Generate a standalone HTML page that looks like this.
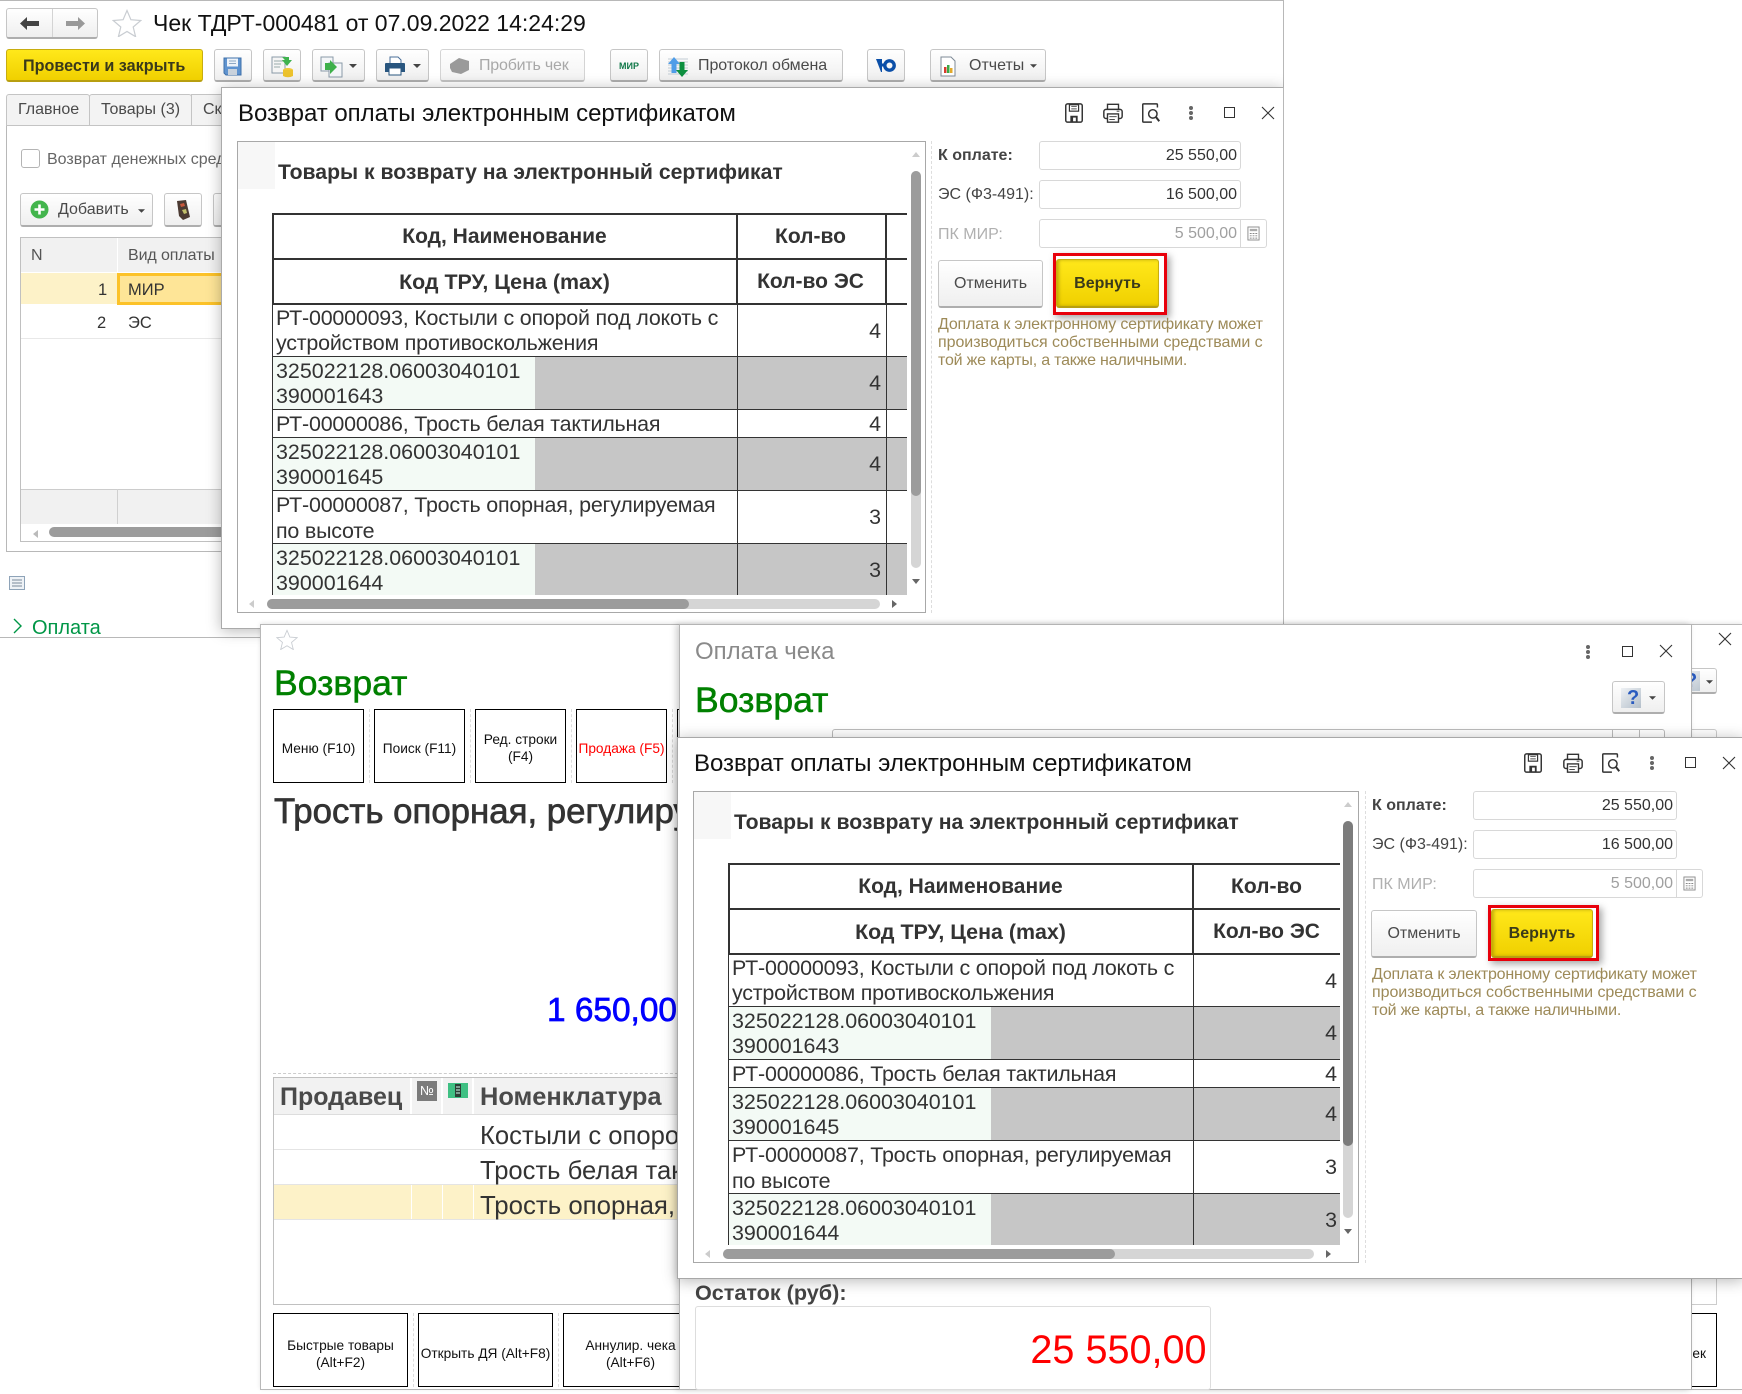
<!DOCTYPE html>
<html lang="ru"><head><meta charset="utf-8"><title>Чек</title>
<style>
html,body{margin:0;padding:0;background:#fff}
#p{position:relative;width:1742px;height:1394px;overflow:hidden;background:#fff;font-family:"Liberation Sans","DejaVu Sans",sans-serif;color:#333}
#p div,#p span,#p svg{position:absolute;box-sizing:border-box}
.t{white-space:nowrap;line-height:30px;height:30px}
.b{background:linear-gradient(#fff,#efefef);border:1px solid #c6c6c6;border-bottom:2px solid #aeaeae;border-radius:3px}
.y{background:linear-gradient(#ffe81a,#f0d000);border:1px solid #c8ad10;border-bottom:2px solid #b89f10;border-radius:3px}
.i{background:#fff;border:1px solid #d8d8d8;border-radius:3px}
.k{background:#fff;border:1.5px solid #000}
.h{font-size:13.7px;text-align:center;color:#111;line-height:17px;white-space:nowrap}
.sep{border-left:1px dashed #ddd;width:1px}
.dlg{background:#fff;border:1px solid #aaa;box-shadow:0 2px 14px rgba(0,0,0,.28);overflow:hidden;clip-path:inset(-20px 0 -20px -20px)}
.win{background:#fff;border:1px solid #b8b8b8}
.c{left:0;width:465px;text-align:center;font-weight:bold;font-size:21px;color:#333}
.n{left:0;width:609px;text-align:right;font-size:21.4px;color:#333;margin-top:1px}
.l{left:4px;font-size:21.45px;color:#333}
.w{letter-spacing:-.2px}
.hl{height:2px;background:#333;left:0}
.tl{height:1px;background:#333;left:0;width:700px}
.v{width:1px;background:#333}
.note{color:#9d8a58;font-size:16px;letter-spacing:-.2px}
.gr{font-size:35.6px;color:#008000;-webkit-text-stroke:.5px #008000}
</style></head><body><div id="p">
<svg width="0" height="0" style="display:none">
<symbol id="sv" viewBox="0 0 24 24"><rect x="3" y="2" width="18" height="20" rx="2" fill="none" stroke="#333" stroke-width="1.6"/><rect x="7" y="3" width="10" height="7" fill="none" stroke="#333" stroke-width="1.3"/><path d="M9 5h6M9 7.5h6" stroke="#555"/><rect x="8" y="15" width="8" height="7" fill="#333"/><rect x="11" y="17" width="3" height="4" fill="#fff"/></symbol>
<symbol id="pr" viewBox="0 0 24 24"><path d="M6 8V2.5h12V8" fill="none" stroke="#333" stroke-width="1.5"/><rect x="2" y="8" width="20" height="10" rx="2.5" fill="none" stroke="#333" stroke-width="1.6"/><rect x="6" y="13" width="12" height="9" fill="#fff" stroke="#333" stroke-width="1.5"/><path d="M8 16h8M8 19h6M16 10h3" stroke="#333"/></symbol>
<symbol id="pv" viewBox="0 0 24 24"><path d="M19 6V3q0-1-1-1H4Q3 2 3 3v18q0 1 1 1h9" fill="none" stroke="#333" stroke-width="1.6"/><circle cx="14" cy="13" r="4.6" fill="none" stroke="#333" stroke-width="1.6"/><path d="M17.5 16.5L21 21" stroke="#333" stroke-width="2.2"/></symbol>
<symbol id="x" viewBox="0 0 14 14"><path d="M1 1L13 13M13 1L1 13" stroke="#333" stroke-width="1.1" fill="none"/></symbol>
<symbol id="st" viewBox="0 0 30 28"><path d="M15 1.5l3.9 9.2 9.9.8-7.6 6.5 2.4 9.7L15 22.5l-8.6 5.2 2.4-9.7L1.2 11.5l9.9-.8z" fill="#fff" stroke="#c9cdd2" stroke-width="1.2"/></symbol>
<symbol id="calc" viewBox="0 0 14 16"><rect x="1" y="1" width="12" height="14" fill="#fff" stroke="#8a8a8a"/><rect x="3" y="3" width="8" height="2.5" fill="#aaa"/><path d="M3 8h2M6 8h2M9 8h2M3 10.5h2M6 10.5h2M9 10.5h2M3 13h2M6 13h2M9 13h2" stroke="#888"/></symbol>
<symbol id="ar" viewBox="0 0 8 4"><path d="M0 0h8L4 4z" fill="#444"/></symbol>
</svg>

<!-- WINDOW 1 -->
<div class="win" style="left:-1px;top:0;width:1285px;height:638px"></div>
<div class="b" style="left:6px;top:8px;width:92px;height:31px"></div>
<div style="left:52px;top:9px;width:1px;height:28px;background:#d4d4d4"></div>
<svg style="left:20px;top:16px" width="20" height="15" viewBox="0 0 20 15"><path d="M0 7.5L7 1v4h12v5H7v4z" fill="#444"/></svg>
<svg style="left:65px;top:16px" width="20" height="15" viewBox="0 0 20 15"><path d="M20 7.5L13 1v4H1v5h12v4z" fill="#999"/></svg>
<svg style="left:112px;top:9px" width="30" height="28"><use href="#st"/></svg>
<span class="t" style="left:153px;top:8px;font-size:23px;color:#111">Чек ТДРТ-000481 от 07.09.2022 14:24:29</span>

<div class="y" style="left:6px;top:49px;width:197px;height:33px"></div>
<span class="t" style="left:23px;top:51px;font-size:16.2px;font-weight:bold;color:#3a3a1a">Провести и закрыть</span>
<div class="b" style="left:214px;top:49px;width:38px;height:33px"></div>
<svg style="left:223px;top:57px" width="19" height="19" viewBox="0 0 19 19"><path d="M1 1h17v17H3l-2-2z" fill="#5f93cf" stroke="#3f70aa"/><rect x="4" y="1.5" width="11" height="8" fill="#eef3f9"/><path d="M6 4h7M6 6.500h7" stroke="#8fa8c4"/><rect x="5" y="12" width="9" height="6" fill="#c9d2dc"/></svg>
<div class="b" style="left:263px;top:49px;width:38px;height:33px"></div>
<svg style="left:271px;top:56px" width="24" height="22" viewBox="0 0 24 22"><rect x="1" y="1" width="13" height="16" fill="#f5f5f5" stroke="#8a9aa8"/><path d="M3 5h9M3 8h7M3 11h6" stroke="#9aa"/><path d="M11 1h7v3l3 0-5 6-5-6h3z" fill="#3fb34f"/><ellipse cx="17" cy="14" rx="5" ry="2" fill="#f0c93a"/><path d="M12 14v6q5 2.500 10 0v-6" fill="#ecc22d"/></svg>
<div class="b" style="left:312px;top:49px;width:53px;height:33px"></div>
<svg style="left:320px;top:56px" width="24" height="22" viewBox="0 0 24 22"><rect x="1" y="1" width="12" height="14" fill="#f4f6f8" stroke="#8a9aa8"/><rect x="9" y="7" width="13" height="14" fill="#f4f6f8" stroke="#8a9aa8"/><path d="M5 7h5V4l7 7-7 7v-4H5z" fill="#3eb04a"/></svg>
<svg style="left:349px;top:64px" width="8" height="4"><use href="#ar"/></svg>
<div class="b" style="left:376px;top:49px;width:53px;height:33px"></div>
<svg style="left:385px;top:56px" width="20" height="20" viewBox="0 0 20 20"><path d="M5 8V1h8l3 3v4" fill="#fff" stroke="#4a6f99"/><path d="M0 8q0-1 1-1h18q1 0 1 1v8H0z" fill="#29567f"/><rect x="4" y="12" width="12" height="7" fill="#fff" stroke="#29567f"/></svg>
<svg style="left:413px;top:64px" width="8" height="4"><use href="#ar"/></svg>
<div class="b" style="left:440px;top:49px;width:145px;height:33px;opacity:.75"></div>
<svg style="left:449px;top:57px" width="21" height="18" viewBox="0 0 21 18"><path d="M1 7l9-6 10 3v9l-8 4-9-2-2-4z" fill="#9a9a9a"/></svg>
<span class="t" style="left:479px;top:51px;font-size:16px;color:#a8a8a8;letter-spacing:-.2px">Пробить чек</span>
<div class="b" style="left:610px;top:49px;width:38px;height:33px"></div>
<span class="t" style="left:619px;top:51px;font-size:9px;font-weight:bold;color:#12794a">МИР</span>
<div class="b" style="left:659px;top:49px;width:184px;height:33px"></div>
<svg style="left:667px;top:56px" width="22" height="22" viewBox="0 0 22 22"><path d="M1 3h20M1 6h20M1 9h20M1 12h20M1 15h20M1 18h20" stroke="#c2ccd4"/><path d="M7 1l6 7H9.500v9h-5V8H1z" fill="#4f9de8"/><path d="M15 21l-6-7h3.500V6h5v8H21z" fill="#0c8f3f"/></svg>
<span class="t" style="left:698px;top:51px;font-size:16px;color:#4a4a4a;letter-spacing:-.05px">Протокол обмена</span>
<div class="b" style="left:867px;top:49px;width:38px;height:33px"></div>
<svg style="left:876px;top:58px" width="20" height="15" viewBox="0 0 20 15"><path d="M0 1h6v13H5z" fill="#0b4fa8"/><path d="M5 5.500h4v3H5z" fill="#0b4fa8"/><circle cx="13.500" cy="7.500" r="4.700" fill="none" stroke="#0b4fa8" stroke-width="3.400"/></svg>
<div class="b" style="left:930px;top:49px;width:116px;height:33px"></div>
<svg style="left:940px;top:56px" width="16" height="21" viewBox="0 0 16 21"><path d="M1 1h10l4 4v15H1z" fill="#fff" stroke="#7e8a96"/><rect x="4" y="11" width="2.500" height="6" fill="#d63b2c"/><rect x="7" y="9" width="2.500" height="8" fill="#3aa845"/><rect x="10" y="12" width="2.500" height="5" fill="#e2a92a"/></svg>
<span class="t" style="left:969px;top:51px;font-size:16px;color:#4a4a4a">Отчеты</span>
<svg style="left:1030px;top:64px" width="7" height="4"><use href="#ar"/></svg>

<div style="left:6px;top:125px;width:230px;height:427px;border:1px solid #b8b8b8;border-right:0;background:#fff"></div>
<div style="left:6px;top:94px;width:84px;height:32px;background:#f3f3f3;border:1px solid #c4c4c4;border-radius:3px 3px 0 0"></div>
<span class="t" style="left:18px;top:95px;font-size:16px;color:#4a4a4a">Главное</span>
<div style="left:89px;top:94px;width:103px;height:32px;background:#f3f3f3;border:1px solid #c4c4c4;border-radius:3px 3px 0 0"></div>
<span class="t" style="left:101px;top:95px;font-size:16px;color:#4a4a4a">Товары (3)</span>
<div style="left:191px;top:94px;width:50px;height:32px;background:#f3f3f3;border:1px solid #c4c4c4"></div>
<span class="t" style="left:203px;top:95px;font-size:16px;color:#4a4a4a">Ск</span>
<div style="left:21px;top:149px;width:19px;height:19px;border:1px solid #b4b4b4;border-radius:3px;background:#fff"></div>
<span class="t" style="left:47px;top:145px;font-size:16px;color:#666">Возврат денежных сред</span>
<div class="b" style="left:20px;top:193px;width:133px;height:34px"></div>
<svg style="left:30px;top:200px" width="19" height="19" viewBox="0 0 19 19"><circle cx="9.500" cy="9.500" r="9" fill="#43b54d"/><path d="M9.500 4.500v10M4.500 9.500h10" stroke="#fff" stroke-width="2.600"/></svg>
<span class="t" style="left:58px;top:195px;font-size:16px;color:#4a4a4a">Добавить</span>
<svg style="left:138px;top:209px" width="7" height="4"><use href="#ar"/></svg>
<div class="b" style="left:164px;top:193px;width:38px;height:34px"></div>
<svg style="left:175px;top:200px" width="16" height="20" viewBox="0 0 16 20"><path d="M2 1l9-1 4 17-7 3-4-4z" fill="#4b3a32"/><path d="M5 4l4-1 1 3-4 1z" fill="#c8583c"/><path d="M7 10l4-1 1 4-3 1z" fill="#c2c06a"/></svg>
<div class="b" style="left:213px;top:193px;width:30px;height:34px"></div>
<div style="left:20px;top:237px;width:211px;height:305px;border:1px solid #c0c0c0;border-right:0;background:#fff"></div>
<div style="left:21px;top:238px;width:96px;height:34px;background:#f1f1f1"></div>
<div style="left:118px;top:238px;width:110px;height:34px;background:#f1f1f1"></div>
<span class="t" style="left:31px;top:241px;font-size:16px;color:#555">N</span>
<span class="t" style="left:128px;top:241px;font-size:16px;color:#555;letter-spacing:-.1px">Вид оплаты</span>
<div style="left:21px;top:273px;width:96px;height:31px;background:#fdf2c8"></div>
<div style="left:117px;top:273px;width:110px;height:32px;background:#fee597;border:3px solid #fcc228;border-right:0"></div>
<span class="t" style="left:98px;top:275px;font-size:16.500px">1</span>
<span class="t" style="left:128px;top:275px;font-size:16.500px">МИР</span>
<span class="t" style="left:97px;top:308px;font-size:16.500px">2</span>
<span class="t" style="left:128px;top:308px;font-size:16.500px">ЭС</span>
<div style="left:21px;top:338px;width:211px;height:1px;background:#e8e8e8"></div>
<div style="left:21px;top:489px;width:211px;height:35px;background:#f1f1f1;border-top:1px solid #ccc"></div>
<div style="left:117px;top:489px;width:1px;height:35px;background:#d0d0d0"></div>
<div style="left:49px;top:527px;width:190px;height:10px;background:#9c9c9c;border-radius:5px"></div>
<div style="left:33px;top:530px;border:4px solid transparent;border-right:5px solid #bbb;border-left:0"></div>
<svg style="left:9px;top:576px" width="16" height="14" viewBox="0 0 16 14"><rect x=".5" y=".5" width="15" height="13" fill="#eef2f6" stroke="#8ea3b8"/><path d="M3 4h10M3 7h10M3 10h10" stroke="#7b8b9b"/></svg>
<svg style="left:13px;top:618px" width="9" height="16" viewBox="0 0 9 16"><path d="M1 1l7 7-7 7" fill="none" stroke="#009646" stroke-width="1.400"/></svg>
<span class="t" style="left:32px;top:613px;font-size:20px;color:#009646">Оплата</span>

<!-- DIALOG 1 -->
<div class="dlg" style="left:221px;top:87px;width:1063px;height:542px;border-right:1px solid #b8b8b8">
<span class="t" style="left:16px;top:11px;font-size:24px;color:#111;letter-spacing:-.04px">Возврат оплаты электронным сертификатом</span>
<svg style="left:841px;top:14px" width="22" height="22"><use href="#sv"/></svg>
<svg style="left:880px;top:14px" width="22" height="22"><use href="#pr"/></svg>
<svg style="left:918px;top:14px" width="22" height="22"><use href="#pv"/></svg>
<div style="left:967px;top:18px;width:4px;height:4px;background:#666;border-radius:50%"></div><div style="left:967px;top:23px;width:4px;height:4px;background:#666;border-radius:50%"></div><div style="left:967px;top:28px;width:4px;height:4px;background:#666;border-radius:50%"></div>
<div style="left:1002px;top:19px;width:11px;height:11px;border:1.300px solid #333"></div>
<svg style="left:1039px;top:18px" width="14" height="14"><use href="#x"/></svg>
<div style="left:15px;top:53px;width:689px;height:472px;border:1px solid #a8a8a8;background:#fff"></div>
<div style="left:16px;top:54px;width:37px;height:47px;background:#f7f7f7"></div>
<span class="t" style="left:56px;top:70px;font-size:21.2px;font-weight:bold;color:#333">Товары к возврату на электронный сертификат</span>
<div style="left:50px;top:125px;width:635px;height:382px;overflow:hidden">
<div style="left:0;top:144px;width:700px;height:52px;background:#c6c6c6"></div>
<div style="left:0;top:224px;width:700px;height:53px;background:#c6c6c6"></div>
<div style="left:0;top:330px;width:700px;height:52px;background:#c6c6c6"></div>
<div style="left:0;top:144px;width:263px;height:52px;background:#f3faf5"></div>
<div style="left:0;top:224px;width:263px;height:53px;background:#f3faf5"></div>
<div style="left:0;top:330px;width:263px;height:52px;background:#f3faf5"></div>
<div class="hl" style="top:0;width:700px"></div><div class="hl" style="top:45px;width:700px"></div><div class="hl" style="top:90px;width:700px"></div>
<div style="left:0;top:0;width:2px;height:92px;background:#333"></div><div style="left:464px;top:0;width:2px;height:92px;background:#333"></div><div style="left:613px;top:0;width:2px;height:92px;background:#333"></div>
<div class="v" style="left:0;top:92px;height:290px"></div><div class="v" style="left:465px;top:92px;height:290px"></div><div class="v" style="left:614px;top:92px;height:290px"></div>
<div class="tl" style="top:143px"></div><div class="tl" style="top:196px"></div><div class="tl" style="top:224px"></div><div class="tl" style="top:277px"></div><div class="tl" style="top:330px"></div>
<span class="t c" style="top:9px">Код, Наименование</span>
<span class="t c" style="top:54px;font-size:21.4px">Код ТРУ, Цена (max)</span>
<span class="t c" style="left:465px;width:147px;top:9px">Кол-во</span>
<span class="t c" style="left:465px;width:147px;top:54px">Кол-во ЭС</span>
<span class="t l w" style="top:90px">РТ-00000093, Костыли с опорой под локоть с</span>
<span class="t l w" style="top:115px">устройством противоскольжения</span>
<span class="t l" style="top:143px">325022128.06003040101</span>
<span class="t l" style="top:168px">390001643</span>
<span class="t l w" style="top:196px">РТ-00000086, Трость белая тактильная</span>
<span class="t l" style="top:224px">325022128.06003040101</span>
<span class="t l" style="top:249px">390001645</span>
<span class="t l w" style="top:277px">РТ-00000087, Трость опорная, регулируемая</span>
<span class="t l w" style="top:303px">по высоте</span>
<span class="t l" style="top:330px">325022128.06003040101</span>
<span class="t l" style="top:355px">390001644</span>
<span class="t n" style="top:102px">4</span><span class="t n" style="top:154px">4</span><span class="t n" style="top:195px">4</span><span class="t n" style="top:235px">4</span><span class="t n" style="top:288px">3</span><span class="t n" style="top:341px">3</span>
</div>
<div style="left:689px;top:83px;width:10px;height:397px;background:#d5d5d5;border-radius:5px"></div>
<div style="left:689px;top:83px;width:10px;height:325px;background:#9c9c9c;border-radius:5px"></div>
<div style="left:690px;top:64px;border:4px solid transparent;border-bottom:5px solid #ccc;border-top:0"></div>
<div style="left:690px;top:491px;border:4px solid transparent;border-top:5px solid #666;border-bottom:0"></div>
<div style="left:45px;top:511px;width:613px;height:10px;background:#d5d5d5;border-radius:5px"></div>
<div style="left:45px;top:511px;width:422px;height:10px;background:#9c9c9c;border-radius:5px"></div>
<div style="left:27px;top:512px;border:4px solid transparent;border-right:5px solid #ccc;border-left:0"></div>
<div style="left:670px;top:512px;border:4px solid transparent;border-left:5px solid #666;border-right:0"></div>
<div class="sep" style="left:709px;top:53px;height:472px"></div>
<span class="t" style="left:716px;top:53px;font-size:16px;font-weight:bold;color:#444">К оплате:</span>
<div class="i" style="left:817px;top:53px;width:202px;height:29px"></div>
<span class="t" style="left:818px;top:53px;font-size:16px;width:197px;text-align:right">25 550,00</span>
<span class="t" style="left:716px;top:92px;font-size:16px;color:#444">ЭС (Ф3-491):</span>
<div class="i" style="left:817px;top:92px;width:202px;height:29px"></div>
<span class="t" style="left:818px;top:92px;font-size:16px;width:197px;text-align:right">16 500,00</span>
<span class="t" style="left:716px;top:132px;font-size:16px;color:#b0b0b0">ПК МИР:</span>
<div class="i" style="left:817px;top:131px;width:228px;height:29px"></div>
<div style="left:1018px;top:132px;width:1px;height:27px;background:#d8d8d8"></div>
<span class="t" style="left:818px;top:131px;font-size:16px;width:197px;text-align:right;color:#a0a0a0">5 500,00</span>
<svg style="left:1025px;top:138px" width="13" height="15"><use href="#calc"/></svg>
<div class="b" style="left:716px;top:172px;width:105px;height:48px"></div>
<span class="t" style="left:716px;top:181px;width:105px;text-align:center;font-size:16px;color:#4a4a4a">Отменить</span>
<div style="left:831px;top:165px;width:114px;height:62px;border:3.500px solid #e8000b;background:#fff;box-shadow:3px 3px 7px rgba(0,0,0,.35)"></div>
<div class="y" style="left:834px;top:171px;width:103px;height:49px;background:linear-gradient(#ffe81a,#f0d000);box-shadow:inset 2px 0 3px rgba(140,120,0,.5)"></div>
<span class="t" style="left:834px;top:181px;width:103px;text-align:center;font-size:16px;font-weight:bold;color:#3a3a1a">Вернуть</span>
<span class="t note" style="left:716px;top:222px">Доплата к электронному сертификату может</span>
<span class="t note" style="left:716px;top:240px;letter-spacing:-.05px">производиться собственными средствами с</span>
<span class="t note" style="left:716px;top:258px">той же карты, а также наличными.</span>
</div>

<!-- WINDOW 2 -->
<div class="win" style="left:260px;top:624px;width:1483px;height:766px;box-shadow:0 -1px 4px rgba(0,0,0,.1)"></div>
<svg style="left:276px;top:629px" width="22" height="21"><use href="#st"/></svg>
<span class="t gr" style="left:274px;top:668px">Возврат</span>
<div class="k" style="left:273px;top:709px;width:91px;height:74px"></div>
<span class="h" style="left:273px;width:91px;top:740px">Меню (F10)</span>
<div class="sep" style="left:369px;top:709px;height:74px"></div>
<div class="k" style="left:374px;top:709px;width:91px;height:74px"></div>
<span class="h" style="left:374px;width:91px;top:740px">Поиск (F11)</span>
<div class="sep" style="left:470px;top:709px;height:74px"></div>
<div class="k" style="left:475px;top:709px;width:91px;height:74px"></div>
<span class="h" style="left:475px;width:91px;top:731px;white-space:normal;padding:0 4px">Ред. строки (F4)</span>
<div class="sep" style="left:571px;top:709px;height:74px"></div>
<div class="k" style="left:576px;top:709px;width:91px;height:74px"></div>
<span class="h" style="left:576px;width:91px;top:740px;color:#f00">Продажа (F5)</span>
<div class="sep" style="left:672px;top:709px;height:74px"></div>
<div class="k" style="left:677px;top:709px;width:40px;height:74px"></div>
<span class="t" style="left:274px;top:797px;font-size:34.8px;color:#333;-webkit-text-stroke:.7px #333">Трость опорная, регулиру</span>
<span class="t" style="left:547px;top:996px;font-size:33.4px;color:#00f;-webkit-text-stroke:.7px #00f">1 650,00</span>
<div style="left:273px;top:1073px;width:420px;border-top:1px dashed #ccc;height:1px"></div>
<div style="left:273px;top:1077px;width:420px;height:228px;border:1px solid #c0c0c0;background:#fff"></div>
<div style="left:274px;top:1078px;width:136px;height:36px;background:#f2f2f2"></div>
<div style="left:412px;top:1078px;width:29px;height:36px;background:#f2f2f2"></div>
<div style="left:443px;top:1078px;width:29px;height:36px;background:#f2f2f2"></div>
<div style="left:474px;top:1078px;width:220px;height:36px;background:#f2f2f2"></div>
<span class="t" style="left:280px;top:1082px;font-size:25px;font-weight:bold;color:#4a4a4a">Продавец</span>
<span class="t" style="left:480px;top:1082px;font-size:25.4px;font-weight:bold;color:#4a4a4a">Номенклатура</span>
<div style="left:417px;top:1081px;width:20px;height:20px;background:#7b7b7b"></div>
<span style="left:417px;top:1082px;width:20px;text-align:center;font-size:13px;color:#fff;line-height:17px">№</span>
<svg style="left:448px;top:1083px" width="20" height="15" viewBox="0 0 20 15"><rect width="20" height="15" fill="#3fc083"/><rect x="7" y="1" width="6" height="13" fill="#2c3f35"/><path d="M8 4h4M8 7h4M8 10h4" stroke="#cfe"/></svg>
<div style="left:274px;top:1114px;width:420px;height:1px;background:#ddd"></div>
<div style="left:274px;top:1149px;width:420px;height:1px;background:#e4e4e4"></div>
<div style="left:274px;top:1184px;width:420px;height:1px;background:#e4e4e4"></div>
<div style="left:274px;top:1185px;width:420px;height:34px;background:#fdf2c8"></div>
<div style="left:411px;top:1185px;width:1px;height:34px;background:#fff"></div><div style="left:442px;top:1185px;width:1px;height:34px;background:#fff"></div><div style="left:473px;top:1185px;width:1px;height:34px;background:#fff"></div>
<div style="left:274px;top:1219px;width:420px;height:1px;background:#e4e4e4"></div>
<span class="t" style="left:480px;top:1121px;font-size:25.6px">Костыли с опорой под локоть</span>
<span class="t" style="left:480px;top:1156px;font-size:25.6px">Трость белая тактильная</span>
<span class="t" style="left:480px;top:1191px;font-size:25.8px">Трость опорная, регулируемая</span>
<div class="k" style="left:273px;top:1313px;width:135px;height:74px"></div>
<span class="h" style="left:273px;width:135px;top:1337px">Быстрые товары<br>(Alt+F2)</span>
<div class="sep" style="left:413px;top:1313px;height:74px"></div>
<div class="k" style="left:418px;top:1313px;width:135px;height:74px"></div>
<span class="h" style="left:418px;width:135px;top:1345px">Открыть ДЯ (Alt+F8)</span>
<div class="sep" style="left:558px;top:1313px;height:74px"></div>
<div class="k" style="left:563px;top:1313px;width:135px;height:74px"></div>
<span class="h" style="left:563px;width:135px;top:1337px">Аннулир. чека<br>(Alt+F6)</span>
<!-- right remnant of win2 -->
<div class="b" style="left:1660px;top:668px;width:57px;height:26px"></div>
<div style="left:1685px;top:671px;width:15px;height:20px;background:linear-gradient(135deg,#eef1f4,#bcc6d0)"></div>
<span class="t" style="left:1685px;top:666px;font-size:20px;font-weight:bold;color:#2a5bbf">?</span>
<svg style="left:1706px;top:680px" width="7" height="4"><use href="#ar"/></svg>
<svg style="left:1718px;top:632px" width="14" height="14"><use href="#x"/></svg>
<div style="left:1691px;top:634px;width:1px;height:11px;background:#333"></div>
<div style="left:1660px;top:729px;width:57px;height:12px;border:1px solid #ccc;border-radius:3px 3px 0 0"></div>
<div style="left:1660px;top:1260px;width:57px;height:45px;border:1px solid #ccc;background:#fff"></div>
<div class="k" style="left:1600px;top:1313px;width:117px;height:74px"></div>
<span class="h" style="left:1600px;width:117px;top:1345px;text-align:right;padding-right:11px">Закрыть чек</span>

<!-- WINDOW 3 -->
<div style="left:679px;top:624px;width:1013px;height:766px;background:#fff;border:1px solid #b4b4b4;border-bottom:1px solid #b8b8b8;box-shadow:-3px 0 6px rgba(0,0,0,.18)"></div>
<span class="t" style="left:695px;top:637px;font-size:24px;color:#8a8a8a">Оплата чека</span>
<span class="t gr" style="left:695px;top:685px">Возврат</span>
<div style="left:1586px;top:645px;width:4px;height:4px;background:#666;border-radius:50%"></div><div style="left:1586px;top:650px;width:4px;height:4px;background:#666;border-radius:50%"></div><div style="left:1586px;top:655px;width:4px;height:4px;background:#666;border-radius:50%"></div>
<div style="left:1622px;top:646px;width:11px;height:11px;border:1.300px solid #333"></div>
<svg style="left:1659px;top:644px" width="14" height="14"><use href="#x"/></svg>
<div class="b" style="left:1612px;top:681px;width:53px;height:33px"></div>
<div style="left:1621px;top:688px;width:20px;height:20px;background:linear-gradient(135deg,#eef1f4,#b4bfca)"></div>
<span class="t" style="left:1627px;top:683px;font-size:20px;font-weight:bold;color:#2a5bbf">?</span>
<svg style="left:1649px;top:696px" width="7" height="4"><use href="#ar"/></svg>
<div style="left:832px;top:729px;width:833px;height:12px;border:1px solid #bbb;border-radius:3px 3px 0 0"></div>
<div style="left:1612px;top:729px;width:1px;height:12px;background:#bbb"></div><div style="left:1639px;top:729px;width:1px;height:12px;background:#bbb"></div>
<span class="t" style="left:695px;top:1278px;font-size:21.6px;font-weight:bold;color:#444">Остаток (руб):</span>
<div style="left:695px;top:1306px;width:516px;height:84px;border:1px solid #ddd;border-radius:3px;background:#fff"></div>
<span class="t" style="left:1000px;top:1335px;width:206.5px;text-align:right;font-size:39.6px;color:#f00">25 550,00</span>

<!-- DIALOG 2 -->
<div class="dlg" style="left:677px;top:737px;width:1067px;height:542px;border-color:#a8a8a8;border-right:0">
<span class="t" style="left:16px;top:11px;font-size:24px;color:#111;letter-spacing:-.04px">Возврат оплаты электронным сертификатом</span>
<svg style="left:844px;top:14px" width="22" height="22"><use href="#sv"/></svg>
<svg style="left:884px;top:14px" width="22" height="22"><use href="#pr"/></svg>
<svg style="left:922px;top:14px" width="22" height="22"><use href="#pv"/></svg>
<div style="left:972px;top:18px;width:4px;height:4px;background:#666;border-radius:50%"></div><div style="left:972px;top:23px;width:4px;height:4px;background:#666;border-radius:50%"></div><div style="left:972px;top:28px;width:4px;height:4px;background:#666;border-radius:50%"></div>
<div style="left:1007px;top:19px;width:11px;height:11px;border:1.300px solid #333"></div>
<svg style="left:1044px;top:18px" width="14" height="14"><use href="#x"/></svg>
<div style="left:15px;top:53px;width:666px;height:472px;border:1px solid #a8a8a8;background:#fff"></div>
<div style="left:16px;top:54px;width:37px;height:47px;background:#f7f7f7"></div>
<span class="t" style="left:56px;top:70px;font-size:21.2px;font-weight:bold;color:#333">Товары к возврату на электронный сертификат</span>
<div style="left:50px;top:125px;width:612px;height:382px;overflow:hidden">
<div style="left:0;top:144px;width:700px;height:52px;background:#c6c6c6"></div>
<div style="left:0;top:224px;width:700px;height:53px;background:#c6c6c6"></div>
<div style="left:0;top:330px;width:700px;height:52px;background:#c6c6c6"></div>
<div style="left:0;top:144px;width:263px;height:52px;background:#f3faf5"></div>
<div style="left:0;top:224px;width:263px;height:53px;background:#f3faf5"></div>
<div style="left:0;top:330px;width:263px;height:52px;background:#f3faf5"></div>
<div class="hl" style="top:0;width:700px"></div><div class="hl" style="top:45px;width:700px"></div><div class="hl" style="top:90px;width:700px"></div>
<div style="left:0;top:0;width:2px;height:92px;background:#333"></div><div style="left:464px;top:0;width:2px;height:92px;background:#333"></div>
<div class="v" style="left:0;top:92px;height:290px"></div><div class="v" style="left:465px;top:92px;height:290px"></div>
<div class="tl" style="top:143px"></div><div class="tl" style="top:196px"></div><div class="tl" style="top:224px"></div><div class="tl" style="top:277px"></div><div class="tl" style="top:330px"></div>
<span class="t c" style="top:9px">Код, Наименование</span>
<span class="t c" style="top:54px;font-size:21.4px">Код ТРУ, Цена (max)</span>
<span class="t c" style="left:465px;width:147px;top:9px">Кол-во</span>
<span class="t c" style="left:465px;width:147px;top:54px">Кол-во ЭС</span>
<span class="t l w" style="top:90px">РТ-00000093, Костыли с опорой под локоть с</span>
<span class="t l w" style="top:115px">устройством противоскольжения</span>
<span class="t l" style="top:143px">325022128.06003040101</span>
<span class="t l" style="top:168px">390001643</span>
<span class="t l w" style="top:196px">РТ-00000086, Трость белая тактильная</span>
<span class="t l" style="top:224px">325022128.06003040101</span>
<span class="t l" style="top:249px">390001645</span>
<span class="t l w" style="top:277px">РТ-00000087, Трость опорная, регулируемая</span>
<span class="t l w" style="top:303px">по высоте</span>
<span class="t l" style="top:330px">325022128.06003040101</span>
<span class="t l" style="top:355px">390001644</span>
<span class="t n" style="top:102px">4</span><span class="t n" style="top:154px">4</span><span class="t n" style="top:195px">4</span><span class="t n" style="top:235px">4</span><span class="t n" style="top:288px">3</span><span class="t n" style="top:341px">3</span>
</div>
<div style="left:665px;top:83px;width:10px;height:397px;background:#d5d5d5;border-radius:5px"></div>
<div style="left:665px;top:83px;width:10px;height:325px;background:#7c7c7c;border-radius:5px"></div>
<div style="left:666px;top:64px;border:4px solid transparent;border-bottom:5px solid #ccc;border-top:0"></div>
<div style="left:666px;top:491px;border:4px solid transparent;border-top:5px solid #666;border-bottom:0"></div>
<div style="left:45px;top:511px;width:591px;height:10px;background:#d5d5d5;border-radius:5px"></div>
<div style="left:45px;top:511px;width:392px;height:10px;background:#9c9c9c;border-radius:5px"></div>
<div style="left:27px;top:512px;border:4px solid transparent;border-right:5px solid #ccc;border-left:0"></div>
<div style="left:648px;top:512px;border:4px solid transparent;border-left:5px solid #666;border-right:0"></div>
<div class="sep" style="left:687px;top:53px;height:472px"></div>
<span class="t" style="left:694px;top:53px;font-size:16px;font-weight:bold;color:#444">К оплате:</span>
<div class="i" style="left:795px;top:53px;width:204px;height:29px"></div>
<span class="t" style="left:796px;top:53px;font-size:16px;width:199px;text-align:right">25 550,00</span>
<span class="t" style="left:694px;top:92px;font-size:16px;color:#444">ЭС (Ф3-491):</span>
<div class="i" style="left:795px;top:92px;width:204px;height:29px"></div>
<span class="t" style="left:796px;top:92px;font-size:16px;width:199px;text-align:right">16 500,00</span>
<span class="t" style="left:694px;top:132px;font-size:16px;color:#b0b0b0">ПК МИР:</span>
<div class="i" style="left:795px;top:131px;width:230px;height:29px"></div>
<div style="left:998px;top:132px;width:1px;height:27px;background:#d8d8d8"></div>
<span class="t" style="left:796px;top:131px;font-size:16px;width:199px;text-align:right;color:#a0a0a0">5 500,00</span>
<svg style="left:1005px;top:138px" width="13" height="15"><use href="#calc"/></svg>
<div class="b" style="left:693px;top:172px;width:106px;height:48px"></div>
<span class="t" style="left:693px;top:181px;width:106px;text-align:center;font-size:16px;color:#4a4a4a">Отменить</span>
<div style="left:810px;top:167px;width:111px;height:56px;border:3.500px solid #e8000b;background:#fff;box-shadow:3px 3px 7px rgba(0,0,0,.35)"></div>
<div class="y" style="left:813px;top:171px;width:102px;height:49px;box-shadow:inset 2px 0 3px rgba(140,120,0,.5)"></div>
<span class="t" style="left:813px;top:181px;width:102px;text-align:center;font-size:16px;font-weight:bold;color:#3a3a1a">Вернуть</span>
<span class="t note" style="left:694px;top:222px">Доплата к электронному сертификату может</span>
<span class="t note" style="left:694px;top:240px;letter-spacing:-.05px">производиться собственными средствами с</span>
<span class="t note" style="left:694px;top:258px">той же карты, а также наличными.</span>
</div>
</div></body></html>
